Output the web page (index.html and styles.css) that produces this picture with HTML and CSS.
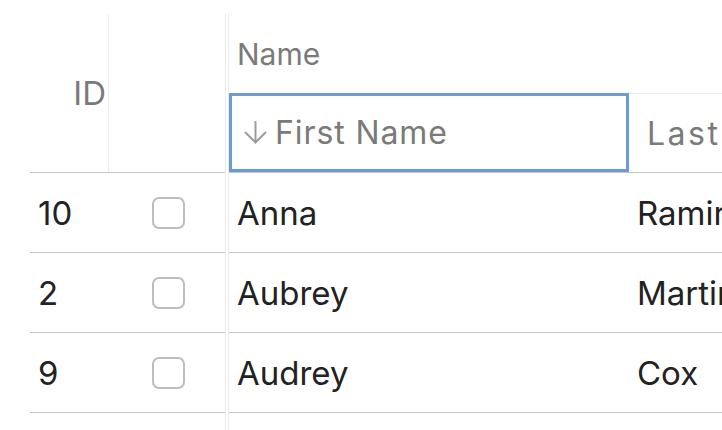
FILE: index.html
```html
<!DOCTYPE html>
<html>
<head>
<meta charset="utf-8">
<link rel="stylesheet" href="styles.css">
</head>
<body>
<div class="grid">
  <div class="pinned">
    <div class="phead">
      <div class="hcell id-h">ID</div>
      <div class="hcell cb-h"></div>
    </div>
    <div class="row"><div class="cell id">10</div><div class="cell cb"><span class="box"></span></div></div>
    <div class="row"><div class="cell id">2</div><div class="cell cb"><span class="box"></span></div></div>
    <div class="row"><div class="cell id">9</div><div class="cell cb"><span class="box"></span></div></div>
    <div class="row"><div class="cell id">4</div><div class="cell cb"><span class="box"></span></div></div>
  </div>
  <div class="center">
    <div class="chead">
      <div class="group">Name</div>
      <div class="cols">
        <div class="hcell fn"><svg class="arrow" viewBox="0 0 25 24"><path d="M12.5 1 V22.5 M2 12 L12.5 22.5 L23 12" fill="none" stroke="#9c9c9c" stroke-width="2"/></svg><span class="fn-t">First Name</span></div>
        <div class="hcell ln">Last Name</div>
      </div>
    </div>
    <div class="row"><div class="cell first">Anna</div><div class="cell last">Ramirez</div></div>
    <div class="row"><div class="cell first">Aubrey</div><div class="cell last">Martin</div></div>
    <div class="row"><div class="cell first">Audrey</div><div class="cell last">Cox</div></div>
    <div class="row"><div class="cell first">Ava</div><div class="cell last">Lee</div></div>
  </div>
</div>
</body>
</html>
```

FILE: styles.css
```css
html, body {
  margin: 0;
  padding: 0;
  background: #fff;
  overflow: hidden;
}
body {
  width: 722px;
  height: 430px;
  font-family: "Inter", "Noto Sans", sans-serif;
  color: #222;
}
.grid {
  display: flex;
  padding: 14px 0 0 30px;
  height: 500px;
}
.pinned {
  width: 195px;
  flex: none;
  border-right: 1px solid #ebebeb;
}
.center {
  flex: none;
  width: 700px;
  margin-left: 2px;
  border-left: 1px solid #ebebeb;
}
.phead {
  display: flex;
  height: 158px;
  border-bottom: 1px solid #c9c4c4;
}
.hcell {
  color: #7a7a7a;
  font-size: 32px;
  letter-spacing: 0.9px;
  display: flex;
  align-items: center;
  box-sizing: border-box;
}
.id-h {
  width: 79px;
  border-right: 1px solid #ececec;
  justify-content: flex-end;
  padding-right: 2px;
  font-size: 33px;
  letter-spacing: 0;
}
.cb-h {
  width: 116px;
}
.chead {
  border-bottom: 1px solid #c9c4c4;
}
.group {
  height: 79px;
  display: flex;
  align-items: center;
  padding-left: 8px;
  color: #7a7a7a;
  font-size: 30px;
}
.cols {
  display: flex;
  height: 79px;
}
.fn {
  width: 400px;
  border: 3px solid #6b9bd2;
  padding-left: 11px;
  gap: 7px;
}
.arrow {
  flex: none;
  width: 25px;
  height: 24px;
  margin-top: -2px;
}
.ln {
  flex: 1;
  border-top: 1px solid #eeeeee;
  padding-left: 18px;
  letter-spacing: 2.5px;
  white-space: nowrap;
}
.row {
  display: flex;
  height: 79px;
  border-bottom: 1px solid #c9c4c4;
}
.cell {
  display: flex;
  align-items: center;
  font-size: 33px;
  box-sizing: border-box;
}
.id {
  width: 79px;
  padding-left: 8px;
}
.cb {
  width: 116px;
  justify-content: center;
  padding-left: 2px;
}
.box {
  width: 33px;
  height: 32px;
  box-sizing: border-box;
  border: 2px solid #bdbdbd;
  border-radius: 7px;
}
.first {
  width: 400px;
  padding-left: 8px;
}
.last {
  flex: 1;
  padding-left: 8px;
}
```
